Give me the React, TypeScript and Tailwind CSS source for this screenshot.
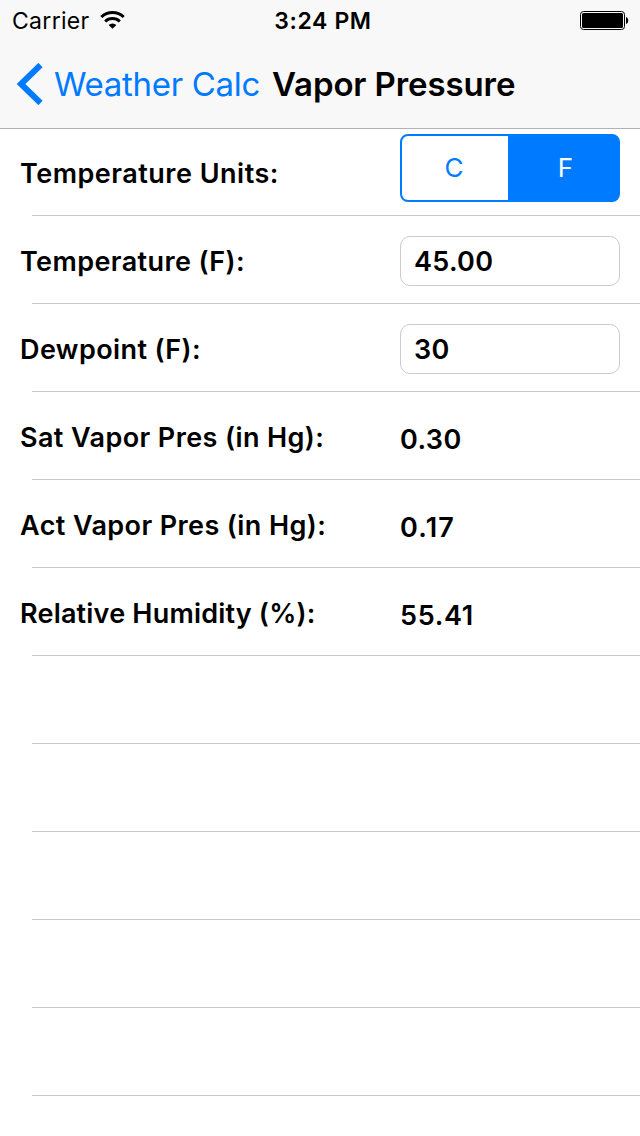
import type { ReactNode } from 'react';

type RowProps = {
  label?: string;
  tracking?: string;
  children?: ReactNode;
};

function Row({ label, tracking = 'tracking-[0.4px]', children }: RowProps) {
  return (
    <div className="relative flex h-22 px-5 after:absolute after:bottom-0 after:left-8 after:right-0 after:h-px after:bg-[#c8c7cc]">
      {label && (
        <span
          className={`w-[380px] pt-[29px] text-[27px] leading-[34px] font-semibold whitespace-nowrap [font-feature-settings:'calt'_0] ${tracking}`}
        >
          {label}
        </span>
      )}
      {children}
    </div>
  );
}

function Field({ value }: { value: string }) {
  return (
    <div className="mt-5 h-[50px] w-[220px] rounded-[10px] border border-[#cccccc] px-[13px] text-[27px] leading-[50px] font-semibold tracking-[0.3px]">
      {value}
    </div>
  );
}

function Value({ value, tracking = 'tracking-[0.4px]' }: { value: string; tracking?: string }) {
  return <span className={`pt-[31px] text-[27px] leading-[34px] font-semibold ${tracking}`}>{value}</span>;
}

export default function App() {
  return (
    <div className="h-[1136px] w-[640px] overflow-hidden bg-white font-['Inter','Liberation_Sans',sans-serif] text-black">
      {/* The bottom border overlaps the first row by one pixel */}
      <header className="-mb-px h-[129px] border-b border-[#b2b2b2] bg-[#f8f8f8]">
        {/* Status bar */}
        <div className="grid h-10 grid-cols-3 items-center pt-[2px] pl-3 pr-[11px] text-[23px]">
          <div className="flex items-center gap-[10px]">
            <span className="tracking-[0.3px]">Carrier</span>
            <svg width="25" height="20" viewBox="0 0 25 20" fill="none" stroke="#000" strokeWidth="3">
              <path d="M1.3 6a16.200 16.200 0 0 1 22.400 0M5.200 10.500a10.700 10.700 0 0 1 14.600 0" />
              <path d="M12.500 17.800 8.600 13.900a5.800 5.800 0 0 1 7.800 0z" fill="#000" stroke="none" />
            </svg>
          </div>
          <span className="pl-[5px] text-center font-semibold tracking-[0.6px] whitespace-nowrap">3:24 PM</span>
          <svg className="justify-self-end" width="49" height="20" viewBox="0 0 49 20">
            <rect x="0.5" y="0.5" width="44" height="18" rx="3" fill="none" stroke="#000" />
            <rect x="2" y="2" width="41" height="15" rx="1.5" />
            <path d="M46 6c3 1 3 6 0 7z" />
          </svg>
        </div>

        {/* Navigation bar */}
        <div className="flex h-[88px] items-center pl-4 text-[33px] whitespace-nowrap">
          <svg width="27" height="42" viewBox="0 0 27 42" fill="none" stroke="#007aff" strokeWidth="6">
            <path d="M24.500 2 5 21l19.500 19" />
          </svg>
          <span className="ml-[11px] w-[205px] pt-[2px] tracking-[-0.3px] text-[#007aff]">Weather Calc</span>
          <h1 className="ml-[13px] pt-[2px] font-semibold tracking-[-0.1px]">Vapor Pressure</h1>
        </div>
      </header>

      <main>
        <Row label="Temperature Units:" tracking="tracking-[0.5px]">
          <div className="mt-[6px] flex h-[68px] w-[220px] overflow-hidden rounded-[8px] border-2 border-[#007aff] bg-[#007aff] text-center text-[26px] leading-[64px]">
            <span className="w-[106px] bg-white pr-[2px] text-[#007aff]">C</span>
            <span className="flex-1 pl-[5px] text-white">F</span>
          </div>
        </Row>
        <Row label="Temperature (F):">
          <Field value="45.00" />
        </Row>
        <Row label="Dewpoint (F):">
          <Field value="30" />
        </Row>
        <Row label="Sat Vapor Pres (in Hg):">
          <Value value="0.30" />
        </Row>
        <Row label="Act Vapor Pres (in Hg):">
          <Value value="0.17" tracking="tracking-[1.2px]" />
        </Row>
        <Row label="Relative Humidity (%):" tracking="tracking-[0.2px]">
          <Value value="55.41" tracking="tracking-[0.7px]" />
        </Row>
        <Row />
        <Row />
        <Row />
        <Row />
        <Row />
      </main>
    </div>
  );
}
